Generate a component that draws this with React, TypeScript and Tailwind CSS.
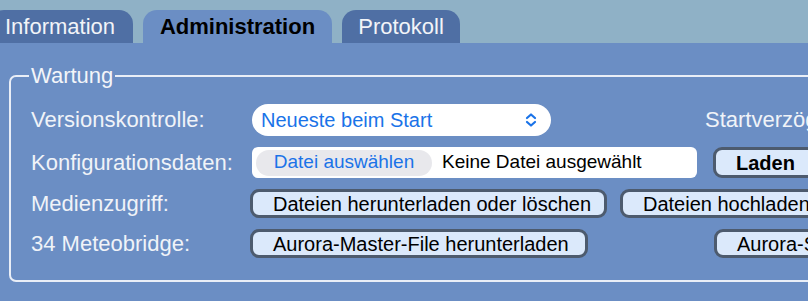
import React from "react";

const font = { fontFamily: '"Liberation Sans", Arial, sans-serif' };

const Btn = ({ children, className = "" }: { children: React.ReactNode; className?: string }) => (
  <button
    className={
      "h-[29px] shrink-0 whitespace-nowrap rounded-[9px] border-[3px] border-[#4d5b6e] bg-[#dbe9fb] px-[20px] text-[20px] leading-none text-black " +
      className
    }
  >
    {children}
  </button>
);

export default function App() {
  const tabs = [
    { name: "Information", active: false, w: "w-[143px] ml-[-10px] pl-[15px]" },
    { name: "Administration", active: true, w: "w-[189px] justify-center" },
    { name: "Protokoll", active: false, w: "w-[118px] justify-center" },
  ];

  return (
    <div className="h-[301px] w-[808px] overflow-hidden bg-[#8fb1c6]" style={font}>
      {/* Tabs */}
      <div className="flex h-[43px] items-end gap-[10px]">
        {tabs.map((t) => (
          <div
            key={t.name}
            className={
              "flex h-[33px] shrink-0 items-center rounded-t-[14px] text-[22px] " +
              t.w +
              (t.active ? " bg-[#6b8ec4] font-bold text-black" : " bg-[#4f6fa4] text-[#f2f4f8]")
            }
          >
            {t.name}
          </div>
        ))}
      </div>

      {/* Panel */}
      <div className="h-[258px] bg-[#6b8ec4] pl-[9px] pt-[21px]">
        <fieldset className="h-[218px] w-[900px] rounded-[7px] border-2 border-[#e9eef7] pl-[20px] pt-[15px]">
          <legend className="ml-[-2px] px-[2px] text-[22px] leading-[24px] text-[#f3f5f9]">Wartung</legend>

          <div className="grid grid-cols-[221px_453px_auto] items-center gap-y-[11px] text-[22px] text-[#f0f3f8]">
            {/* Row 1 */}
            <div className="flex h-[32px] items-center whitespace-nowrap">Versionskontrolle:</div>
            <div className="flex h-[32px] w-[299px] items-center justify-between rounded-full bg-white pl-[9px] pr-[14px] text-[20px] text-[#1a73e8]">
              <span>Neueste beim Start</span>
              <svg width="12" height="14" viewBox="0 0 12 14" fill="none" stroke="#1a73e8" strokeWidth="2.2" strokeLinecap="round" strokeLinejoin="round">
                <path d="M2 5 L6 1.5 L10 5" />
                <path d="M2 9 L6 12.5 L10 9" />
              </svg>
            </div>
            <div className="whitespace-nowrap">Startverzögerung:</div>

            {/* Row 2 */}
            <div className="flex h-[31px] items-center whitespace-nowrap">Konfigurationsdaten:</div>
            <div className="flex h-[31px] w-[445px] items-center rounded-[6px] bg-white pl-[4px] text-[19px] text-black">
              <span className="flex h-[26px] w-[176px] items-center justify-center rounded-full bg-[#e8e8ec] text-[#1a73e8]">
                Datei auswählen
              </span>
              <span className="whitespace-nowrap pl-[10px]">Keine Datei ausgewählt</span>
            </div>
            <div className="flex pl-[8px]">
              <Btn className="h-[31px] w-[120px] text-left font-bold">Laden</Btn>
            </div>

            {/* Row 3 */}
            <div className="flex h-[29px] items-center">Medienzugriff:</div>
            <div className="col-span-2 flex gap-[13px]">
              <Btn className="ml-[-2px] w-[357px]">Dateien herunterladen oder löschen</Btn>
              <Btn className="w-[240px] text-left">Dateien hochladen</Btn>
            </div>

            {/* Row 4 */}
            <div className="flex h-[29px] items-center">34 Meteobridge:</div>
            <div className="flex">
              <Btn className="ml-[-2px] w-[338px]">Aurora-Master-File herunterladen</Btn>
            </div>
            <div className="flex pl-[9px]">
              <Btn className="w-[220px] text-left">Aurora-Slave-File</Btn>
            </div>
          </div>
        </fieldset>
      </div>
    </div>
  );
}
